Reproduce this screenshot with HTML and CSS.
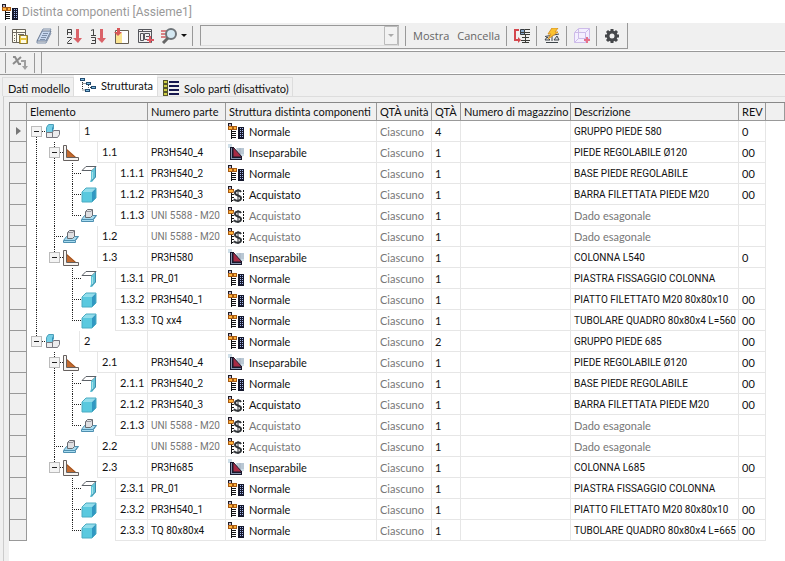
FILE: index.html
```html
<!DOCTYPE html>
<html lang="it">
<head>
  <meta charset="UTF-8">
  <meta name="viewport" content="width=device-width, initial-scale=1.0">
  <title>Distinta componenti [Assieme1]</title>
  <link rel="stylesheet" href="styles.css">
</head>
<body>
  <svg class="simboli" aria-hidden="true">
    <symbol id="normale" viewBox="0 0 16 16">
      <path d="M3 7h1v9H3zM3 8h5v1H3zM3 10h5v1H3zM3 12h5v1H3zM3 14h5v1H3z" fill="#111"/>
      <path d="M0 0h4v4H0z" fill="#1c1c26"/><path d="M1 1h2v2H1z" fill="#c3b4c6"/>
      <path d="M0 3h5v4H0zM5 3h4v4H5z" fill="#a85a12"/><path d="M1 4h3v2H1zM6 4h2v2H6z" fill="#ffb43c"/>
      <path d="M10 4h6v12h-6z" fill="#15182c"/>
      <path d="M12 5h1v1h-1zM14 5h1v1h-1zM12 7h1v1h-1zM14 7h1v1h-1zM12 9h1v1h-1zM14 9h1v1h-1zM12 11h1v1h-1zM14 11h1v1h-1zM12 13h1v1h-1zM14 13h1v1h-1z" fill="#a9bbf0"/>
    </symbol>
    <symbol id="inseparabile" viewBox="0 0 16 16">
      <path d="M0 0h4v4H0zM8 4h8v8H8z" fill="#cfdfe8"/>
      <path d="M9 5h7M9 7h7M11 9h5M12 4v7" stroke="#a4b0bf"/>
      <path d="M2 3h3v10h9v3H2z" fill="#18182c"/><path d="M3 4h1v10h9v1H3z" fill="#8493ad"/>
      <path d="M5 3l9 10H5z" fill="#a82a44" stroke="#18182c"/>
    </symbol>
    <symbol id="acquistato" viewBox="0 0 16 16">
      <path d="M3 7h1v9H3zM3 8h4v1H3zM3 11h3v1H3zM3 14h4v1H3z" fill="#111"/>
      <path d="M0 0h4v4H0z" fill="#1c1c26"/><path d="M1 1h2v2H1z" fill="#c3b4c6"/>
      <path d="M0 3h6v4H0z" fill="#a85a12"/><path d="M1 4h4v2H1z" fill="#ffb43c"/>
      <path d="M13 6C12 4 7 4 7 7c0 3 6 2 6 5s-5 4-7 1M10 3v13" fill="none" stroke="#fff" stroke-width="3"/>
      <path d="M13 6C12 4 7 4 7 7c0 3 6 2 6 5s-5 4-7 1" fill="none" stroke="#303438" stroke-width="2"/>
      <path d="M10 3v13" stroke="#303438"/>
      <path d="M15 4h1v2h-1zM15 7h1v2h-1zM15 10h1v2h-1zM15 13h1v2h-1z" fill="#111"/>
    </symbol>
    <symbol id="gruppo" viewBox="0 0 16 16">
      <path d="M1 4l2-3h5l-1 3zM1 4h6v5H1z" fill="#74d0e6"/>
      <path d="M7 4l1-3v6L7 9z" fill="#2f93bd"/>
      <path d="M1.500 8.500v-5l2-3h5v5" fill="none" stroke="#4a9fba"/>
      <path d="M1.500 8.500h6v5h-6zM7.500 8.500l1-2h6v4l-2 3h-5z" fill="#ececee" stroke="#77777f"/>
    </symbol>
    <symbol id="saldato" viewBox="0 0 16 16">
      <path d="M4 4l9 8H4z" fill="#c46a2e"/><path d="M4 5l8 7" stroke="#9b5221"/>
      <path d="M.5.5h3v12h12v3H.5z" fill="#f6f3f0" stroke="#66605e"/>
    </symbol>
    <symbol id="lamiera" viewBox="0 0 16 16">
      <path d="M1 4.500l4-4h10l-4 4z" fill="#fff" stroke="#5d6167"/>
      <path d="M10 5l5-4v10l-4 5H9l1-3z" fill="#62c4d8"/>
      <path d="M14.500 1v10l-4 4" fill="none" stroke="#3e8ba6"/>
      <path d="M11.500 6v7" stroke="#a3e0e8"/>
    </symbol>
    <symbol id="solido" viewBox="0 0 16 16">
      <path d="M1 5l4-4h10l-4 4z" fill="#92ddeb"/><path d="M1 5h10v10H1z" fill="#5ac9df"/>
      <path d="M11 5l4-4v10l-4 4z" fill="#3198c2"/>
      <path d="M1 5l4-4h10v10l-4 4H1z" fill="none" stroke="#4bacc3"/>
    </symbol>
    <symbol id="dado" viewBox="0 0 16 16">
      <path d="M.5 11.500l3-4h12l-3 4v2H.5z" fill="#a9dcf0" stroke="#4d8fb0"/>
      <path d="M1 11.500h11l3-4" fill="none" stroke="#4d8fb0"/>
      <path d="M4.500 3.500l2-2h5v6l-2 2h-5z" fill="#e0e0e3" stroke="#696a70"/>
      <path d="M5 3.500h5l1-2" fill="none" stroke="#95969d"/>
    </symbol>
  </svg>

  <header class="titolo">
    <svg class="icona"><use href="#normale"/></svg>
    <h1>Distinta componenti [Assieme1]</h1>
  </header>

  <div class="barra">
    <div class="comandi">
      <span class="maniglia"></span>
      <button class="cmd" aria-label="Esporta distinta">
        <svg viewBox="0 0 16 16"><path d="M.5 1.500h13v13H.5z" fill="#fffdf0" stroke="#68645c"/><path d="M1 4.500h12M4.500 2v12M6 6.500h6M2 7.500h1M2 10.500h1M2 12.500h1" stroke="#706b62" fill="none"/><path d="M7.500 7.500h8v8h-8z" fill="#e8c53c" stroke="#8a7836"/><path d="M9 8h5v2H9zM9 12h5v3H9z" fill="#fffbe4"/></svg>
      </button>
      <button class="cmd" aria-label="Rinumera">
        <svg viewBox="0 0 16 16"><path d="M1 13L6 3h9l-5 10z" fill="#c8d8ef" stroke="#66768e"/><path d="M6 3l1-2h8l-1 2M1 13v2h9l5-10M7 5.500h5M6 7.500h5M5 9.500h5M4 11.500h5" fill="none" stroke="#7d8ea8"/></svg>
      </button>
      <span class="divisore"></span>
      <button class="cmd" aria-label="Ordina elementi">
        <svg viewBox="0 0 16 16"><path d="M1.500 7V1.500h4V7M1 4.500h4M1 9.500h4.500v1l-4 4v1H6" fill="none" stroke="#444"/><path d="M10 1h3v9h3l-4 5-5-5h3z" fill="#da6268"/></svg>
      </button>
      <button class="cmd" aria-label="Rinumera elementi">
        <svg viewBox="0 0 16 16"><path d="M1 2.500l2.500-1V7M1 7.500h5M1 9.500h4.500v6H1M2 12.500h3" fill="none" stroke="#444"/><path d="M10 1h3v9h3l-4 5-5-5h3z" fill="#da6268"/></svg>
      </button>
      <button class="cmd" aria-label="Aggiungi colonne">
        <svg viewBox="0 0 16 16"><path d="M1.500 2.500h13v13h-13z" fill="#fff" stroke="#665e50"/><path d="M2 5h6v10H2z" fill="#fbe491"/><path d="M3 0h3v4h2L4 8 0 4h3z" fill="#d85658"/></svg>
      </button>
      <button class="cmd" aria-label="Aggiungi iProperty">
        <svg viewBox="0 0 16 16"><path d="M.5 1.500h13v13H.5zM1 3.500h13M4.500 1v2M2.500 5.500h3v7h-3zM6.500 5.500h5v6h-5zM8 8.500h3" fill="none" stroke="#55565c"/><path d="M12 8v7M9 12h7" stroke="#db5962" stroke-width="2"/></svg>
      </button>
      <button class="cmd menu" aria-label="Cerca parte">
        <svg viewBox="0 0 16 16"><path d="M0 3h7M0 6h6M0 9h6" stroke="#d98084" stroke-width="2"/><circle cx="10" cy="6" r="5" fill="#d4e8f2" stroke="#6e7479" stroke-width="2"/><path d="M7 10l-5 5" stroke="#666" stroke-width="3"/></svg>
        <span class="freccia"></span>
      </button>
      <span class="divisore"></span>
      <select class="elenco" aria-label="Filtro" disabled><option></option></select>
      <span class="divisore"></span>
      <button class="testo">Mostra</button>
      <button class="testo">Cancella</button>
      <span class="divisore"></span>
      <button class="cmd" aria-label="Struttura">
        <svg viewBox="0 0 16 16"><path d="M5 2H1v10h4" fill="none" stroke="#d4474d" stroke-width="2"/><path d="M4 9l3 3-3 3z" fill="#d4474d"/><path d="M6.500 1.500h4v5h-4z" fill="#88a8cc" stroke="#383c42"/><path d="M11 1.500h5M11 4.500h5M7 4.500h4M7 6.500h9M8 9.500h7M7 12.500h9M8 14.500h7M11.500 7v8" stroke="#3c3c38" fill="none"/></svg>
      </button>
      <span class="divisore"></span>
      <button class="cmd" aria-label="Aggiorna massa">
        <svg viewBox="0 0 16 16"><path d="M8 8v5M2 14.500h12M1 8.500L15 6M3 9l-2 3h5zM13 8l-3 4h5z" fill="#d5dbe0" stroke="#3f454a"/><path d="M8 0h6l-3 4h3L4 11l3-5H4z" fill="#fbc22f" stroke="#d8952a"/></svg>
      </button>
      <span class="divisore"></span>
      <button class="cmd" aria-label="Parte virtuale">
        <svg viewBox="0 0 16 16"><path d="M.5 4.500l4-4h11v10l-4 4H.5zM1 4.500h10.500v10M11.500 4.500l4-4M4.500 1v9.500H15M4.500 10.500l-4 4" fill="#f4efff" stroke="#cdbbe9"/><path d="M13 9v6M10 12h6" stroke="#e6718b" stroke-width="2"/></svg>
      </button>
      <span class="divisore"></span>
      <button class="cmd" aria-label="Impostazioni">
        <svg viewBox="0 0 16 16"><circle cx="8" cy="8" r="4" fill="none" stroke="#45474a" stroke-width="3"/><path d="M8 1v3M8 12v3M1 8h3M12 8h3M3 3l2 2M11 11l2 2M13 3l-2 2M5 11l-2 2" stroke="#45474a" stroke-width="3"/></svg>
      </button>
    </div>
  </div>

  <div class="formula">
    <span class="maniglia"></span>
    <button class="cmd" aria-label="Formula">
      <svg viewBox="0 0 16 16"><path d="M1 2h2l4 7h2M9 2L1 9" fill="none" stroke="#8c8c8c" stroke-width="2"/><path d="M9 6h4v6" fill="none" stroke="#a0a0a0" stroke-width="2"/><path d="M10 11h6l-3 4z" fill="#a0a0a0"/></svg>
    </button>
    <span class="divisore"></span>
    <input class="valore" type="text" aria-label="Valore cella" disabled>
  </div>

  <nav class="schede">
    <button class="scheda">Dati modello</button>
    <button class="scheda attiva">
      <svg viewBox="0 0 16 16"><path d="M2.500 3v10H5M2.500 6.500H6M8.500 8v2.500H11" fill="none" stroke="#333" stroke-dasharray="1 1"/><path d="M0 1h5v3H0zM6 5h5v3H6zM11 9h5v3h-5zM5 12h5v3H5z" fill="#224b70"/><path d="M1 2h3v1H1zM7 6h3v1H7zM12 10h3v1h-3zM6 13h3v1H6z" fill="#82bde0"/></svg>
      Strutturata
    </button>
    <button class="scheda">
      <svg viewBox="0 0 16 16"><path d="M0 0h5v16H0z" fill="#55552a"/><path d="M1 1h3v2H1zM1 5h3v2H1zM1 9h3v2H1zM1 13h3v2H1z" fill="#d0cf45"/><path d="M6 2h10M6 6h10M6 10h10M6 14h10" stroke="#17184f" stroke-width="2"/></svg>
      Solo parti (disattivato)
    </button>
  </nav>

  <main class="pannello">
    <table class="distinta">
      <colgroup>
        <col class="c-sel"><col class="c-elemento"><col class="c-parte"><col class="c-struttura"><col class="c-unita"><col class="c-qta"><col class="c-magazzino"><col class="c-descrizione"><col class="c-rev"><col>
      </colgroup>
      <thead>
        <tr>
          <th></th><th>Elemento</th><th>Numero parte</th><th>Struttura distinta componenti</th><th>QTÀ unità</th><th>QTÀ</th><th>Numero di magazzino</th><th>Descrizione</th><th>REV</th><th></th>
        </tr>
      </thead>
      <tbody id="righe"></tbody>
    </table>
  </main>

  <script>
    // guide: v = linea, t = ramo, l = ultimo ramo, r = radice, b = nodo, f = ultimo nodo, . = vuoto
    const righe = [
      ['r', 'gruppo', '1', '', 'Normale', 4, 'GRUPPO PIEDE 580', '0'],
      ['vb', 'saldato', '1.1', 'PR3H540_4', 'Inseparabile', 1, 'PIEDE REGOLABILE Ø120', '00'],
      ['vvt', 'lamiera', '1.1.1', 'PR3H540_2', 'Normale', 1, 'BASE PIEDE REGOLABILE', '00'],
      ['vvt', 'solido', '1.1.2', 'PR3H540_3', 'Acquistato', 1, 'BARRA FILETTATA PIEDE M20', '00'],
      ['vvl', 'dado', '1.1.3', 'UNI 5588 - M20', 'Acquistato', 1, 'Dado esagonale', ''],
      ['vt', 'dado', '1.2', 'UNI 5588 - M20', 'Acquistato', 1, 'Dado esagonale', ''],
      ['vf', 'saldato', '1.3', 'PR3H580', 'Inseparabile', 1, 'COLONNA L540', '0'],
      ['v.t', 'lamiera', '1.3.1', 'PR_01', 'Normale', 1, 'PIASTRA FISSAGGIO COLONNA', ''],
      ['v.t', 'solido', '1.3.2', 'PR3H540_1', 'Normale', 1, 'PIATTO FILETTATO M20 80x80x10', '00'],
      ['v.l', 'solido', '1.3.3', 'TQ xx4', 'Normale', 1, 'TUBOLARE QUADRO 80x80x4 L=560', '00'],
      ['f', 'gruppo', '2', '', 'Normale', 2, 'GRUPPO PIEDE 685', '00'],
      ['.b', 'saldato', '2.1', 'PR3H540_4', 'Inseparabile', 1, 'PIEDE REGOLABILE Ø120', '00'],
      ['.vt', 'lamiera', '2.1.1', 'PR3H540_2', 'Normale', 1, 'BASE PIEDE REGOLABILE', '00'],
      ['.vt', 'solido', '2.1.2', 'PR3H540_3', 'Acquistato', 1, 'BARRA FILETTATA PIEDE M20', '00'],
      ['.vl', 'dado', '2.1.3', 'UNI 5588 - M20', 'Acquistato', 1, 'Dado esagonale', ''],
      ['.t', 'dado', '2.2', 'UNI 5588 - M20', 'Acquistato', 1, 'Dado esagonale', ''],
      ['.f', 'saldato', '2.3', 'PR3H685', 'Inseparabile', 1, 'COLONNA L685', '00'],
      ['..t', 'lamiera', '2.3.1', 'PR_01', 'Normale', 1, 'PIASTRA FISSAGGIO COLONNA', ''],
      ['..t', 'solido', '2.3.2', 'PR3H540_1', 'Normale', 1, 'PIATTO FILETTATO M20 80x80x10', '00'],
      ['..l', 'solido', '2.3.3', 'TQ 80x80x4', 'Normale', 1, 'TUBOLARE QUADRO 80x80x4 L=665', '00']
    ];
    const classi = { v: 'linea', t: 'ramo', l: 'ultimo', r: 'radice', b: 'nodo', f: 'nodo-ultimo', '.': 'vuoto' };
    const chiusi = new Set();

    function guida(tipo, numero) {
      const bottone = 'rbf'.includes(tipo)
        ? `<button class="espandi" onclick="commuta('${numero}')" aria-label="Espandi o comprimi ${numero}"></button>`
        : '';
      return `<span class="guida ${classi[tipo]}">${bottone}</span>`;
    }

    function formattaRiga(riga, indice) {
      const [guide, icona, numero, parte, struttura, qta, descrizione, rev] = riga;
      const grigia = icona === 'dado' ? 'grigia' : '';
      return `
        <tr class="${grigia}">
          <td class="selettore">${indice === 0 ? '<span class="corrente"></span>' : ''}</td>
          <td class="elemento"><div class="albero">
            ${[...guide].map(tipo => guida(tipo, numero)).join('')}
            <svg class="icona"><use href="#${icona}"/></svg>
            <span class="numero">${numero}</span>
          </div></td>
          <td class="muto codice">${parte}</td>
          <td class="muto tipo"><div class="struttura"><svg class="icona"><use href="#${struttura.toLowerCase()}"/></svg>${struttura}</div></td>
          <td class="unita">Ciascuno</td>
          <td>${qta}</td>
          <td></td>
          <td class="muto ${grigia ? '' : 'codice'}">${descrizione}</td>
          <td>${rev}</td>
          <td class="resto"></td>
        </tr>`;
    }

    function commuta(numero) {
      if (!chiusi.delete(numero)) chiusi.add(numero);
      mostraRighe();
    }

    function mostraRighe() {
      document.getElementById('righe').innerHTML = righe
        .filter(riga => ![...chiusi].some(n => riga[2].startsWith(n + '.')))
        .map(formattaRiga).join('');
    }

    mostraRighe();
  </script>
</body>
</html>
```

FILE: styles.css
```css
* {
  box-sizing: border-box;
}
body {
  margin: 0;
  min-height: 100vh;
  display: flex;
  flex-direction: column;
  font-family: Lato, "Liberation Sans", sans-serif;
  font-size: 11px;
  color: #111;
  background-color: #f0f0f0;
}
button {
  padding: 0;
  border: none;
  background: none;
  font: inherit;
  color: inherit;
}
svg {
  flex: none;
}
.simboli {
  position: absolute;
  width: 0;
  height: 0;
}
.icona {
  width: 16px;
  height: 16px;
}
.titolo {
  display: flex;
  align-items: center;
  gap: 4px;
  height: 23px;
  padding-left: 2px;
  background-color: #fff;
}
.titolo h1 {
  margin: 0;
  font: 12px Roboto, sans-serif;
  color: #999;
}
.barra {
  height: 28px;
  border-bottom: 1px solid #fff;
}
.comandi {
  display: flex;
  align-items: center;
  width: max-content;
  height: 26px;
  padding: 0 3px 0 5px;
  border-right: 1px solid #999;
  border-bottom: 1px solid #999;
}
.maniglia {
  width: 1px;
  height: 20px;
  margin-right: 2px;
  background-color: #999;
}
.divisore {
  width: 1px;
  height: 20px;
  margin: 0 3px 0 2px;
  background-color: #999;
}
.cmd {
  display: flex;
  align-items: center;
  justify-content: center;
  width: 24px;
  height: 22px;
}
.cmd svg {
  width: 16px;
  height: 16px;
}
.cmd.menu {
  width: 32px;
  gap: 4px;
}
.freccia {
  border: 3px solid transparent;
  border-top-color: #111;
  border-bottom: none;
}
.elenco {
  width: 199px;
  height: 21px;
  margin: 0 4px;
  border: 1px solid #999;
  border-right-color: #bbb;
  border-bottom-color: #ddd;
  border-radius: 0;
  appearance: none;
  opacity: 1;
  background: url("data:image/svg+xml,%3Csvg xmlns='http://www.w3.org/2000/svg' width='14' height='19'%3E%3Cpath d='M.5.5h13v18H.5z' fill='%23f2f2f2' stroke='%23bbb'/%3E%3Cpath d='M4 8h6l-3 3z' fill='%23aaa'/%3E%3C/svg%3E") right center no-repeat;
}
.testo {
  padding: 0 4px;
  font: 11px "Open Sans", sans-serif;
  color: #666;
}
.formula {
  display: flex;
  align-items: center;
  height: 23px;
  padding-left: 5px;
  border-top: 1px solid #999;
}
.valore {
  flex: 1;
  align-self: stretch;
  min-width: 0;
  margin-left: 3px;
  border: none;
  border-left: 1px solid #999;
  border-bottom: 1px solid #fff;
  background-color: #f0f0f0;
}
.schede {
  display: flex;
  align-items: flex-end;
  height: 22px;
  padding-left: 2px;
  border-top: 1px solid #999;
}
.scheda {
  display: flex;
  align-items: center;
  gap: 5px;
  height: 19px;
  padding: 2px 3px 0 5px;
  border: 1px solid #ddd;
  border-bottom: none;
}
.scheda svg {
  width: 16px;
  height: 16px;
}
.scheda.attiva {
  height: 21px;
  padding-bottom: 4px;
  background-color: #fff;
  border-color: #fff;
}
.pannello {
  flex: 1;
  margin-left: 3px;
  padding: 5px 0 0 5px;
  border-top: 1px solid #ddd;
  border-left: 1px solid #ccc;
  background: linear-gradient(#f0f0f0, #f0f0f0) left / 5px 100% no-repeat, linear-gradient(#f0f0f0, #f0f0f0) top / 100% 5px no-repeat #fff;
}
.distinta {
  width: 100%;
  table-layout: fixed;
  border-collapse: separate;
  border-spacing: 0;
  border-top: 1px solid #888;
  border-left: 1px solid #888;
}
.c-sel { width: 17px; }
.c-elemento { width: 121px; }
.c-parte { width: 78px; }
.c-struttura { width: 151px; }
.c-unita { width: 55px; }
.c-qta { width: 29px; }
.c-magazzino { width: 110px; }
.c-descrizione { width: 168px; }
.c-rev { width: 27px; }
.distinta th {
  height: 18px;
  padding: 0 0 0 3px;
  border-right: 1px solid #999;
  border-bottom: 1px solid #999;
  background-color: #f0f0f0;
  font-weight: normal;
  text-align: left;
  white-space: nowrap;
}
.distinta td {
  height: 21px;
  padding: 0 0 0 3px;
  border-right: 1px solid #e6e6e6;
  border-bottom: 1px solid #e6e6e6;
  white-space: nowrap;
}
.distinta td.selettore {
  padding: 0 0 0 6px;
  border-color: #999;
  background-color: #f0f0f0;
}
.corrente {
  display: block;
  width: 0;
  border: 4px solid transparent;
  border-left: 5px solid #777;
  border-right: none;
}
.distinta td.elemento {
  padding: 0;
  border-bottom: none;
}
.distinta td.codice {
  font: 10px Roboto, sans-serif;
}
.distinta td.tipo {
  padding-left: 2px;
}
.distinta td.resto {
  border: none;
}
.albero {
  display: flex;
  align-items: center;
  height: 21px;
}
.numero {
  flex: 1;
  height: 21px;
  margin-left: 18px;
  padding-left: 4px;
  border-left: 1px solid #e6e6e6;
  border-bottom: 1px solid #e6e6e6;
  line-height: 20px;
}
.guida {
  --verticale: repeating-linear-gradient(#222 0 1px, transparent 1px 2px);
  --orizzontale: repeating-linear-gradient(90deg, #222 0 1px, transparent 1px 2px);
  flex: none;
  width: 18px;
  height: 21px;
  padding: 5px 0 0 4px;
}
.linea {
  background: var(--verticale) 9px 0 / 1px 21px no-repeat;
}
.ramo,
.nodo {
  background: var(--verticale) 9px 0 / 1px 21px no-repeat, var(--orizzontale) 9px 10px / 9px 1px no-repeat;
}
.ultimo,
.nodo-ultimo {
  background: var(--verticale) 9px 0 / 1px 11px no-repeat, var(--orizzontale) 9px 10px / 9px 1px no-repeat;
}
.radice {
  background: var(--verticale) 9px 10px / 1px 11px no-repeat, var(--orizzontale) 9px 10px / 9px 1px no-repeat;
}
.espandi {
  display: block;
  width: 11px;
  height: 11px;
  border: 1px solid #bbb;
  background: linear-gradient(#222, #222) center / 5px 1px no-repeat #f4f4f4;
}
.struttura {
  display: flex;
  align-items: center;
  gap: 5px;
}
.unita,
.grigia .muto {
  color: #777;
}
```
